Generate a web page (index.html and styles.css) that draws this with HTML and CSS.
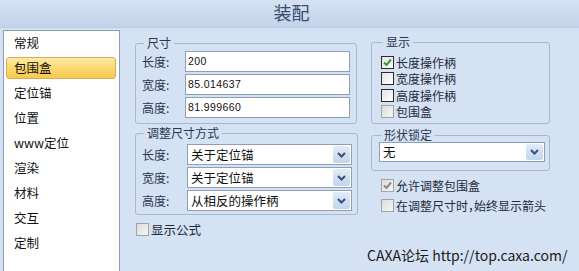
FILE: index.html
```html
<!DOCTYPE html>
<html lang="zh-CN">
<head>
    <meta charset="UTF-8">
    <title>装配</title>
    <link rel="stylesheet" href="styles.css">
</head>
<body>
    <div class="title">装配</div>

    <div class="main">
      <!-- 左侧分类 -->
      <ul class="nav">
        <li>常规</li>
        <li class="on">包围盒</li>
        <li>定位锚</li>
        <li>位置</li>
        <li>www定位</li>
        <li>渲染</li>
        <li>材料</li>
        <li>交互</li>
        <li>定制</li>
      </ul>

      <div class="pane">
        <div class="col">
          <fieldset class="grp g-size">
            <legend>尺寸</legend>
            <div class="row"><span class="lb">长度:</span><div class="inp">200</div></div>
            <div class="row"><span class="lb">宽度:</span><div class="inp">85.014637</div></div>
            <div class="row"><span class="lb">高度:</span><div class="inp">81.999660</div></div>
          </fieldset>

          <fieldset class="grp g-mode">
            <legend>调整尺寸方式</legend>
            <div class="row"><span class="lb">长度:</span><div class="sel">关于定位锚<span class="btn"><svg width="9" height="6" viewBox="0 0 9 6"><path d="M1 1l3.5 3.5L8 1" fill="none" stroke="#34507e" stroke-width="2"/></svg></span></div></div>
            <div class="row"><span class="lb">宽度:</span><div class="sel">关于定位锚<span class="btn"><svg width="9" height="6" viewBox="0 0 9 6"><path d="M1 1l3.5 3.5L8 1" fill="none" stroke="#34507e" stroke-width="2"/></svg></span></div></div>
            <div class="row"><span class="lb">高度:</span><div class="sel">从相反的操作柄<span class="btn"><svg width="9" height="6" viewBox="0 0 9 6"><path d="M1 1l3.5 3.5L8 1" fill="none" stroke="#34507e" stroke-width="2"/></svg></span></div></div>
          </fieldset>

          <div class="chk formula"><span class="cb dis"></span>显示公式</div>
        </div>

        <div class="col">
          <fieldset class="grp g-show">
            <legend>显示</legend>
            <div class="chk"><span class="cb"><svg width="11" height="11" viewBox="0 0 11 11"><path d="M2 5.5l2.5 2.5L9 2.5" fill="none" stroke="#3a9a3a" stroke-width="2"/></svg></span>长度操作柄</div>
            <div class="chk"><span class="cb"></span>宽度操作柄</div>
            <div class="chk"><span class="cb"></span>高度操作柄</div>
            <div class="chk"><span class="cb dis"></span>包围盒</div>
          </fieldset>

          <fieldset class="grp g-lock">
            <legend>形状锁定</legend>
            <div class="sel wide">无<span class="btn"><svg width="9" height="6" viewBox="0 0 9 6"><path d="M1 1l3.5 3.5L8 1" fill="none" stroke="#34507e" stroke-width="2"/></svg></span></div>
          </fieldset>

          <div class="opts">
            <div class="chk"><span class="cb dis"><svg width="11" height="11" viewBox="0 0 11 11"><path d="M2 5.5l2.5 2.5L9 2.5" fill="none" stroke="#8a8a8a" stroke-width="2"/></svg></span>允许调整包围盒</div>
            <div class="chk"><span class="cb dis"></span>在调整尺寸时<span class="half">，</span>始终显示箭头</div>
          </div>

          <div class="mark">CAXA论坛 http://top.caxa.com/</div>
        </div>
      </div>
    </div>
</body>
</html>
```

FILE: styles.css
```css
* {
  box-sizing: border-box;
}

body {
  margin: 0;
  width: 579px;
  height: 271px;
  overflow: hidden;
  background: #d5e2f3;
  font-family: "Noto Sans CJK SC", "Liberation Sans", sans-serif;
  font-size: 12px;
  color: #1f2a3a;
}

/* 제목줄 */
.title {
  height: 28px;
  line-height: 25px;
  text-align: center;
  font-size: 18px;
  color: #3b4c6a;
  background: linear-gradient(#d6e2f3, #c2d3ea);
  border-bottom: 1px solid #bccde4;
  padding-left: 4px;
}

.main {
  display: flex;
  height: 243px;
}

/* 왼쪽 목록 */
.nav {
  list-style: none;
  margin: 2px 0 0 3px;
  padding: 1px 0 0;
  width: 117px;
  background: #fff;
  border: 1px solid #8c9db6;
  border-bottom: none;
}
.nav li {
  height: 22px;
  line-height: 20px;
  margin: 0 0 3px 2px;
  width: 110px;
  padding-left: 7px;
  border: 1px solid transparent;
  border-radius: 3px;
  color: #111;
  font-size: 12.5px;
}
.nav li.on {
  background: linear-gradient(#feeaa6, #fbd970 50%, #f7c94e);
  border-color: #d8ae5c;
}

.pane {
  display: flex;
  gap: 14px;
  padding-left: 15px;
}
.col {
  display: flex;
  flex-direction: column;
}
.col:first-child {
  width: 222px;
  padding-top: 8px;
}
.col:last-child {
  width: 179px;
  padding-top: 7px;
}

/* 그룹박스 */
.grp {
  margin: 0;
  border: 1px solid #a7b8cf;
  border-radius: 3px;
  padding: 0 6px 6px;
}
.grp legend {
  padding: 0 3px;
  margin-left: 2px;
  line-height: 14px;
  font-size: 12px;
  color: #2a3650;
}

.row {
  display: flex;
  align-items: center;
  height: 21px;
  margin-top: 2px;
  line-height: 14px;
}
.lb {
  width: 43px;
  color: #2a3650;
}

.g-size {
  padding: 0 6px 5px;
}
.g-size legend + .row {
  margin-top: 1px;
}
.inp {
  width: 165px;
  height: 21px;
  line-height: 19px;
  padding-left: 2px;
  background: #fff;
  border: 1px solid #8f9fb5;
  font-family: "Liberation Sans", sans-serif;
  font-size: 10.5px;
  letter-spacing: 0.4px;
  color: #111;
}

.g-mode {
  margin-top: 2px;
  padding: 2px 5px 3px 6px;
}
.g-mode .lb {
  width: 45px;
}

/* 드롭다운 */
.sel {
  position: relative;
  width: 165px;
  height: 21px;
  line-height: 19px;
  padding-left: 3px;
  background: #fff;
  border: 1px solid #8f9fb5;
  font-size: 12.5px;
  color: #111;
}
.sel .btn {
  position: absolute;
  right: 1px;
  top: 1px;
  bottom: 1px;
  width: 17px;
  display: flex;
  align-items: center;
  justify-content: center;
  background: linear-gradient(#e3ecf8, #c3d4ec);
  border-radius: 2px;
}

/* 체크박스 */
.chk {
  display: flex;
  align-items: center;
  height: 16.5px;
  line-height: 13px;
  white-space: nowrap;
  color: #1f2a3a;
  font-size: 12px;
}
.cb {
  flex: none;
  width: 13px;
  height: 13px;
  margin-right: 2px;
  border: 1px solid #2c2c2c;
  background: linear-gradient(135deg, #e4e4e4, #fff);
  display: flex;
  align-items: center;
  justify-content: center;
}
.cb.dis {
  border-color: #a4a4a4;
  background: linear-gradient(135deg, #dcdcdc, #f6f6f6);
}
.half {
  font-feature-settings: "halt";
}

.formula {
  margin: 8px 0 0 1px;
  height: 13px;
  font-size: 12.5px;
}

.g-show {
  padding: 5px 6px 3px 9px;
}
.g-lock {
  margin-top: 4px;
  padding: 0 4px 8px 7px;
}
.sel.wide {
  width: 166px;
  height: 20px;
  line-height: 18px;
}

.opts {
  margin-top: 4px;
  padding-left: 10px;
}
.opts .chk {
  height: 20px;
}

.mark {
  margin: 33px 0 0 -4px;
  font-size: 14px;
  line-height: 15px;
  color: #1b1b1b;
  white-space: nowrap;
}
```
